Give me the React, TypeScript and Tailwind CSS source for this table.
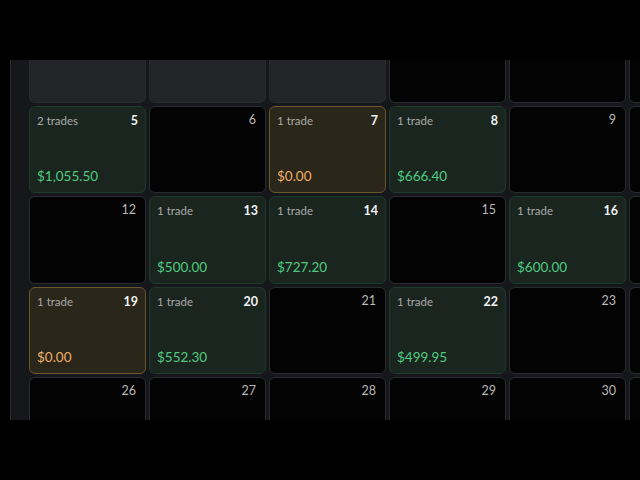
import React from "react";

type Day = {
  day?: number;
  muted?: boolean;
  trades?: number;
  pnl?: string;
  tone?: "win" | "flat";
};

// only the columns that show in the frame; the last one is cut by the edge
const rows: Day[][] = [
  [{ muted: true }, { muted: true }, { muted: true }, {}, {}, {}],
  [
    { day: 5, trades: 2, pnl: "$1,055.50", tone: "win" },
    { day: 6 },
    { day: 7, trades: 1, pnl: "$0.00", tone: "flat" },
    { day: 8, trades: 1, pnl: "$666.40", tone: "win" },
    { day: 9 },
    {},
  ],
  [
    { day: 12 },
    { day: 13, trades: 1, pnl: "$500.00", tone: "win" },
    { day: 14, trades: 1, pnl: "$727.20", tone: "win" },
    { day: 15 },
    { day: 16, trades: 1, pnl: "$600.00", tone: "win" },
    {},
  ],
  [
    { day: 19, trades: 1, pnl: "$0.00", tone: "flat" },
    { day: 20, trades: 1, pnl: "$552.30", tone: "win" },
    { day: 21 },
    { day: 22, trades: 1, pnl: "$499.95", tone: "win" },
    { day: 23 },
    {},
  ],
  [{ day: 26 }, { day: 27 }, { day: 28 }, { day: 29 }, { day: 30 }, {}],
];

const DayCell: React.FC<{ d: Day }> = ({ d }) => {
  if (d.muted) {
    return <div className="h-[87.5px] rounded-md border border-[#2a2b2f] bg-[#232428]" />;
  }
  if (!d.trades) {
    return (
      <div className="h-[87.5px] rounded-md border border-[#2a2b2f] bg-[#030303] pr-[9px] pt-[5px]">
        {d.day && <div className="text-right text-[12.5px] leading-4 text-[#b9b9b9]">{d.day}</div>}
      </div>
    );
  }
  const flat = d.tone === "flat";
  return (
    <div
      className={`h-[87.5px] rounded-md border flex flex-col justify-between pl-[7px] pr-[7px] pt-[6px] pb-[6px] ${
        flat ? "border-[#6a572a] bg-[#2a2619]" : "border-[#1d3a2b] bg-[#1a2520]"
      }`}
    >
      <div className="flex items-center justify-between">
        <span className="text-[11.5px] leading-4 text-[#a9a9a9]">
          {d.trades} {d.trades === 1 ? "trade" : "trades"}
        </span>
        <span className="text-[12.5px] leading-4 font-bold text-[#f2f2f2]">{d.day}</span>
      </div>
      <span className={`text-[13.5px] leading-5 ${flat ? "text-[#eeb06a]" : "text-[#4fcb7f]"}`}>{d.pnl}</span>
    </div>
  );
};

export default function App() {
  return (
    <div className="w-[640px] h-[480px] bg-black flex flex-col overflow-hidden" style={{ fontFamily: "Lato, 'Open Sans', sans-serif" }}>
      <div className="h-[60px] shrink-0" />
      <div className="h-[360px] ml-[10px] border-l border-[#2a2b2e] bg-[#16171a] overflow-hidden pl-[18px]">
        <div className="-mt-[45px] grid grid-cols-[repeat(6,117px)] gap-x-[3px] gap-y-[3px]">
          {rows.flat().map((d, i) => (
            <DayCell key={i} d={d} />
          ))}
        </div>
      </div>
    </div>
  );
}
